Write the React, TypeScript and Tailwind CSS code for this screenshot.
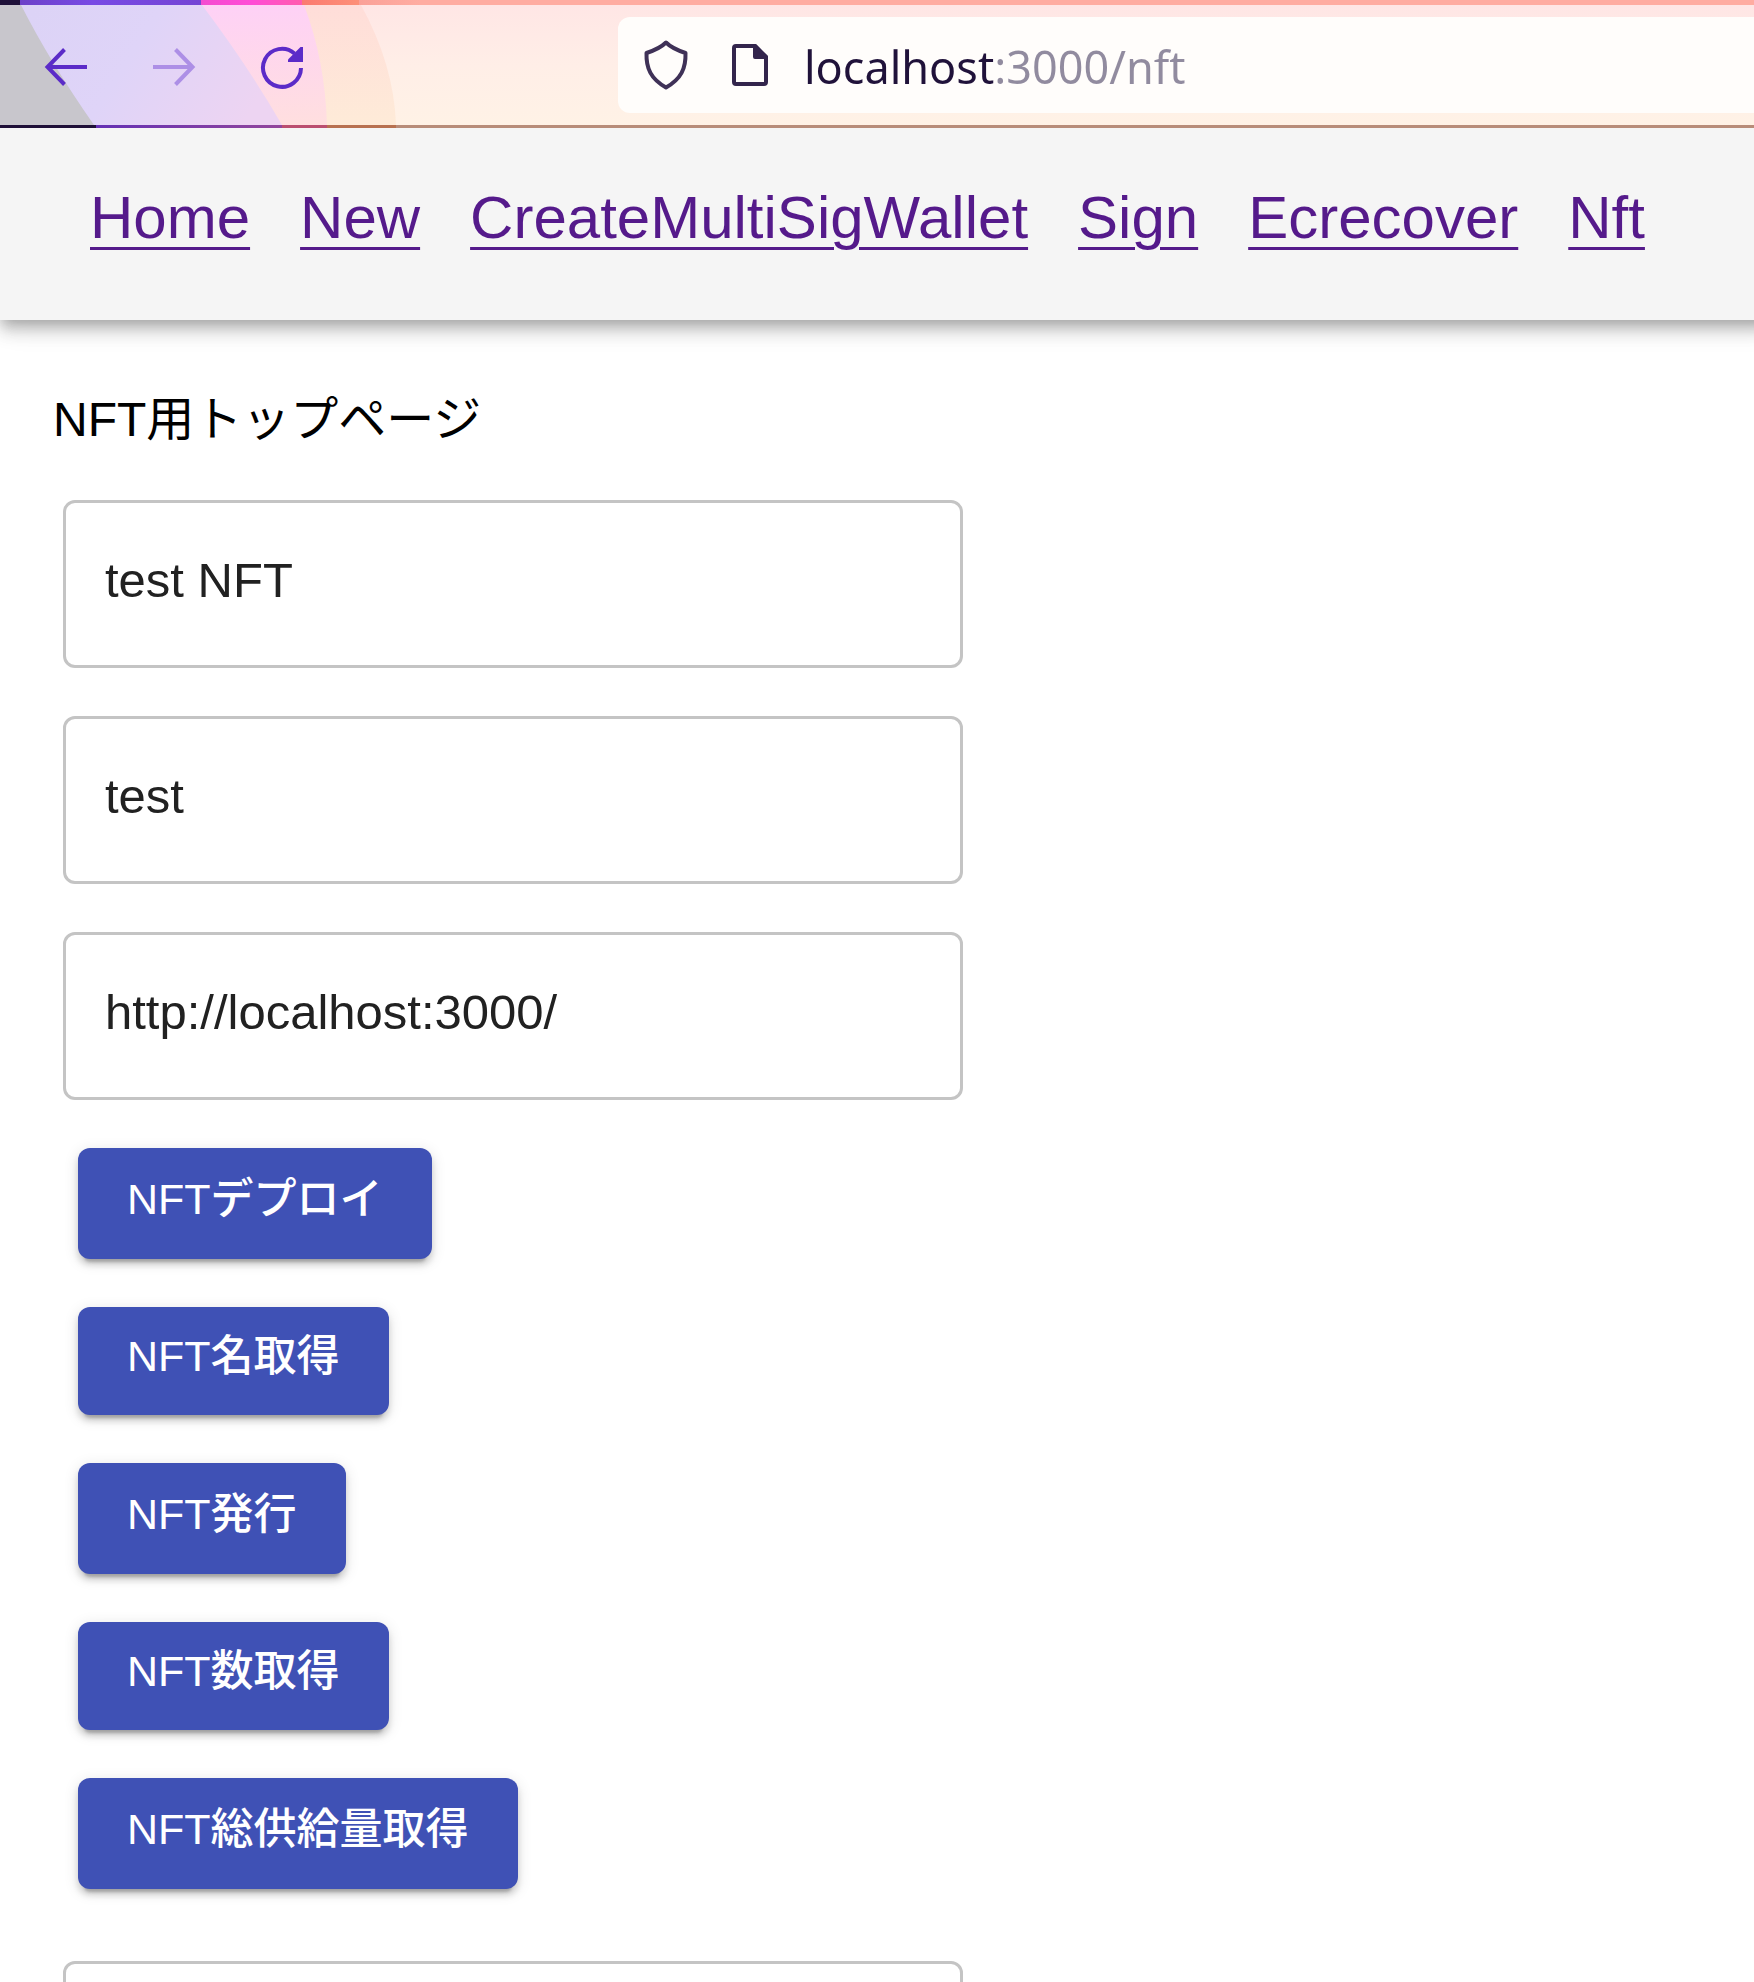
import { useState } from "react";

const links = ["Home", "New", "CreateMultiSigWallet", "Sign", "Ecrecover", "Nft"];

const actions = ["NFTデプロイ", "NFT名取得", "NFT発行", "NFT数取得", "NFT総供給量取得"];

const fields = [
  { id: "name", label: "name", value: "test NFT" },
  { id: "symbol", label: "symbol", value: "test" },
  { id: "uri", label: "token uri", value: "http://localhost:3000/" },
];

function ThemeArt() {
  return (
    <svg className="absolute left-0 top-0" width="420" height="128" viewBox="0 0 420 128" aria-hidden="true">
      <defs>
        <linearGradient id="peach" x1="0" y1="0" x2="0" y2="1">
          <stop offset="0" stopColor="#ffddd9" />
          <stop offset="1" stopColor="#feebd8" />
        </linearGradient>
        <linearGradient id="pink" x1="0" y1="0" x2="0" y2="1">
          <stop offset="0" stopColor="#fed1f6" />
          <stop offset="1" stopColor="#ffdfdf" />
        </linearGradient>
        <linearGradient id="violet" gradientUnits="userSpaceOnUse" x1="40" y1="0" x2="240" y2="128">
          <stop offset="0" stopColor="#dcd3f6" />
          <stop offset="0.45" stopColor="#dfd4f8" />
          <stop offset="1" stopColor="#edd4f2" />
        </linearGradient>
        <linearGradient id="topViolet" x1="0" x2="1">
          <stop offset="0" stopColor="#6c40c8" />
          <stop offset="0.4" stopColor="#784ae4" />
          <stop offset="1" stopColor="#7444d4" />
        </linearGradient>
        <linearGradient id="topPink" x1="0" x2="1">
          <stop offset="0" stopColor="#f44ad0" />
          <stop offset="0.5" stopColor="#ff4cd6" />
          <stop offset="1" stopColor="#ff5cae" />
        </linearGradient>
        <linearGradient id="topOrange" x1="0" x2="1">
          <stop offset="0" stopColor="#fb7a70" />
          <stop offset="1" stopColor="#fd9078" />
        </linearGradient>
        <linearGradient id="topSalmon" x1="0" x2="1">
          <stop offset="0" stopColor="#faa198" />
          <stop offset="1" stopColor="#ffaca1" />
        </linearGradient>
        <linearGradient id="lowViolet" x1="0" x2="1">
          <stop offset="0" stopColor="#6430b4" />
          <stop offset="1" stopColor="#92469c" />
        </linearGradient>
      </defs>
      <path d="M0 5H361Q394 65 396 125H0Z" fill="url(#peach)" />
      <path d="M0 5H304Q325 60 327 125H0Z" fill="url(#pink)" />
      <path d="M0 5H202Q248 66 282 125H0Z" fill="url(#violet)" />
      <path d="M0 5H21Q50 62 94 125H0Z" fill="#c8c6cc" />
      <rect width="21" height="5" fill="#1e1038" />
      <rect x="20" width="181" height="5" fill="url(#topViolet)" />
      <rect x="201" width="101" height="5" fill="url(#topPink)" />
      <rect x="302" width="57" height="5" fill="url(#topOrange)" />
      <rect x="359" width="61" height="5" fill="url(#topSalmon)" />
      <rect y="125" width="96" height="3" fill="#1f1038" />
      <rect x="96" y="125" width="186" height="3" fill="url(#lowViolet)" />
      <rect x="282" y="125" width="45" height="3" fill="#bb4f70" />
      <rect x="327" y="125" width="69" height="3" fill="#b87150" />
      <rect x="396" y="125" width="24" height="3" fill="#b88c79" />
    </svg>
  );
}

function BackIcon() {
  return (
    <svg width="48" height="48" viewBox="0 0 48 48" fill="none" stroke="currentColor" strokeWidth="4" aria-hidden="true">
      <path d="M6 26H45M22.500 8.500L5.500 26L22.500 43.500" />
    </svg>
  );
}

function ForwardIcon() {
  return (
    <svg width="48" height="48" viewBox="0 0 48 48" fill="none" stroke="currentColor" strokeWidth="4" aria-hidden="true">
      <path d="M3 26H42M25.500 8.500L42.500 26L25.500 43.500" />
    </svg>
  );
}

function ReloadIcon() {
  return (
    <svg width="48" height="48" viewBox="0 0 48 48" fill="none" aria-hidden="true">
      <path d="M43 27A19 19 0 1 1 36.500 12.500" stroke="currentColor" strokeWidth="4" />
      <path d="M45 6V21H30V18.500L42.500 6Z" fill="currentColor" />
    </svg>
  );
}

function ShieldIcon() {
  return (
    <svg width="48" height="54" viewBox="0 0 48 54" fill="none" stroke="#3f3157" strokeWidth="4" strokeLinejoin="round" aria-hidden="true">
      <path d="M24 4.500C19 9.500 12 12.500 4.500 15C4 30.500 9 41 24 49.500C39 41 44 30.500 43.500 15C36 12.500 29 9.500 24 4.500Z" />
    </svg>
  );
}

function PageIcon() {
  return (
    <svg width="36" height="42" viewBox="0 0 36 42" fill="none" stroke="#33254c" strokeWidth="4" strokeLinejoin="round" aria-hidden="true">
      <path d="M4 2H23L34 13V38Q34 40 32 40H4Q2 40 2 38V4Q2 2 4 2Z" />
      <path d="M23 2V13H34Z" fill="#33254c" />
    </svg>
  );
}

function Field({ id, label, value }: { id: string; label: string; value: string }) {
  const [text, setText] = useState(value);
  return (
    <input
      id={id}
      aria-label={label}
      value={text}
      onChange={(e) => setText(e.target.value)}
      className="block h-[168px] w-full max-w-[900px] rounded-xl border-3 border-[#c4c4c4] bg-white px-[39px] pb-[9px] text-[49px] text-[#212121] outline-none"
    />
  );
}

export default function App() {
  const [url, setUrl] = useState("localhost:3000/nft");
  return (
    <div className="h-screen overflow-hidden bg-white font-['Liberation_Sans','Noto_Sans_CJK_JP',sans-serif]">
      <div className="relative border-t-5 border-b-3 border-t-[#ffaca1] border-b-[#b88c79] bg-linear-to-b from-[#ffe6e5] via-[#ffeee7] to-[#fff2e6]">
        <div className="absolute -top-[5px] left-0">
          <ThemeArt />
        </div>
        <div className="relative flex h-[120px] items-center pl-[18px]">
          <div className="flex gap-3 text-[#5b2bc8]">
            <button aria-label="Back" className="flex size-24 items-center justify-center">
              <BackIcon />
            </button>
            <button aria-label="Forward" disabled className="flex size-24 items-center justify-center text-[#ad8fe6]">
              <ForwardIcon />
            </button>
            <button aria-label="Reload" className="flex size-24 items-center justify-center">
              <ReloadIcon />
            </button>
          </div>
          <div className="ml-[288px] flex h-24 flex-1 items-center rounded-l-xl bg-[#fffdfb] pl-6">
            <ShieldIcon />
            <div className="ml-[42px]">
              <PageIcon />
            </div>
            <input
              aria-label="Address"
              value={url}
              onChange={(e) => setUrl(e.target.value)}
              className="ml-9 min-w-0 flex-1 bg-[linear-gradient(to_right,#20123a_191px,#918b9f_191px)] bg-clip-text pt-1 font-['Noto_Sans',sans-serif] text-[45px] text-transparent outline-none"
            />
          </div>
        </div>
      </div>

      <header className="-mr-6 bg-[#f5f5f5] pt-[54px] pb-[66px] pl-[90px] shadow-[0_6px_12px_-3px_rgba(0,0,0,0.2),0_12px_15px_0_rgba(0,0,0,0.14),0_3px_30px_0_rgba(0,0,0,0.12)]">
        <nav className="flex gap-[50px] text-[60px] leading-[72px] text-[#551a8b]">
          {links.map((name) => (
            <a key={name} href="#" className="underline decoration-3 underline-offset-[9px]">
              {name}
            </a>
          ))}
        </nav>
      </header>

      <main className="px-[53px] pt-16">
        <h1 className="text-[48px] leading-[72px] text-black">NFT用トップページ</h1>
        <form className="mt-11 ml-[10px] flex flex-col gap-12" onSubmit={(e) => e.preventDefault()}>
          {fields.map((f) => (
            <Field key={f.id} {...f} />
          ))}
          <div className="ml-[15px] flex flex-col items-start gap-12">
            {actions.map((name) => (
              <button
                key={name}
                className="rounded-xl bg-[#3f51b5] px-[49px] pb-[10px] text-[43px] leading-[60px] font-medium text-white shadow-[0_9px_3px_-6px_rgba(0,0,0,0.2),0_6px_6px_0_rgba(0,0,0,0.14),0_3px_15px_0_rgba(0,0,0,0.12)] odd:h-[111px] even:h-[108px]"
              >
                {name}
              </button>
            ))}
          </div>
          <div className="mt-6">
            <Field id="recipient" label="recipient" value="" />
          </div>
        </form>
      </main>
    </div>
  );
}
